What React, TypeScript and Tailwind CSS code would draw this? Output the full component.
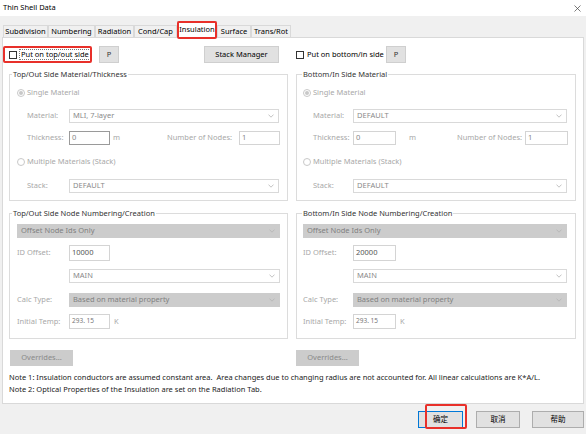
import React from 'react';

const font = "font-['Noto_Sans','Noto_Sans_CJK_SC',sans-serif]";

function Chevron() {
  return (
    <svg width="6" height="4" viewBox="0 0 6 4" className="shrink-0">
      <path d="M0.5 0.6 L3 3.2 L5.5 0.6" fill="none" stroke="#b4b4b4" strokeWidth="0.8" />
    </svg>
  );
}

function Combo({ text, gray, className }: { text: string; gray?: boolean; className: string }) {
  return (
    <div
      className={`flex items-center justify-between pl-[3px] pr-[4px] border ${
        gray ? 'bg-[#cccccc] border-[#cccccc] text-[#808080]' : 'bg-white border-[#d9d9d9] text-[#8a8a8a]'
      } ${className}`}
    >
      <span>{text}</span>
      <Chevron />
    </div>
  );
}

function Input({ value, className }: { value: string; className: string }) {
  return <div className={`flex items-start pl-[2px] leading-[11px] bg-white border ${className}`}>{value}</div>;
}

function Radio({ on }: { on?: boolean }) {
  return (
    <span className="w-[8px] h-[8px] rounded-full border border-[#c8c8c8] flex items-center justify-center shrink-0">
      {on && <span className="w-[4px] h-[4px] rounded-full bg-[#c8c8c8]" />}
    </span>
  );
}

const tabs = [
  { name: 'Subdivision', w: 'w-[45px]' },
  { name: 'Numbering', w: 'w-[47px]' },
  { name: 'Radiation', w: 'w-[39px]' },
  { name: 'Cond/Cap', w: 'w-[43px]' },
  { name: 'Insulation', w: 'w-[40px]', active: true },
  { name: 'Surface', w: 'w-[34px]' },
  { name: 'Trans/Rot', w: 'w-[40px]' },
];

export default function App() {
  return (
    <div className={`w-[586px] h-[434px] bg-[#f0f0f0] flex flex-col text-[7.5px] text-black overflow-hidden ${font}`}>
      {/* Title bar */}
      <div className="h-[16px] bg-white flex items-center justify-between pl-[3px] pr-[5px] shrink-0">
        <span className="text-[7.5px]">Thin Shell Data</span>
        <svg width="7" height="7" viewBox="0 0 7 7">
          <path d="M0.5 0.5 L6.5 6.5 M6.5 0.5 L0.5 6.5" stroke="#444" strokeWidth="0.7" />
        </svg>
      </div>

      {/* Tabs */}
      <div className="h-[21px] flex items-end pl-[3px] shrink-0 relative z-10">
        {tabs.map((t) =>
          t.active ? (
            <div
              key={t.name}
              className={`${t.w} h-[17px] -mb-[1px] bg-white border-t border-l border-r border-[#d9d9d9] flex items-center justify-center relative`}
            >
              <span className="-mt-[1px]">{t.name}</span>
              <span className="absolute -left-[1px] -top-[1px] w-[40px] h-[18px] border-2 border-[#e8302a] rounded-[2px]" />
            </div>
          ) : (
            <div
              key={t.name}
              className={`${t.w} h-[12px] bg-[#f0f0f0] border-t border-l border-r border-[#d9d9d9] flex items-center justify-center`}
            >
              {t.name}
            </div>
          )
        )}
      </div>

      {/* Content panel */}
      <div className="mx-[2px] h-[367px] bg-white border border-[#d9d9d9] flex flex-col pl-[6px] shrink-0">
        {/* Top row */}
        <div className="mt-[8px] h-[17px] grid grid-cols-[279px_280px] gap-x-[8px]">
          <div className="flex items-center relative">
            <span className="absolute -left-[6px] top-0 w-[89px] h-[17px] border-2 border-[#e8302a] rounded-[2px]" />
            <div className="w-[90px] flex items-center">
              <span className="w-[8px] h-[8px] border border-[#333] bg-white shrink-0" />
              <span className="ml-[2px] border border-dotted border-[#777] px-[1px] leading-[9px]">Put on top/out side</span>
            </div>
            <button className="w-[20px] h-[17px] bg-[#e1e1e1] border border-[#cfcfcf] text-[#333]">P</button>
            <button className="ml-[85px] w-[75px] h-[17px] bg-[#e1e1e1] border border-[#cfcfcf]">Stack Manager</button>
          </div>
          <div className="flex items-center">
            <div className="w-[90px] flex items-center">
              <span className="w-[8px] h-[8px] border border-[#333] bg-white shrink-0" />
              <span className="ml-[3px]">Put on bottom/in side</span>
            </div>
            <button className="w-[20px] h-[17px] bg-[#e1e1e1] border border-[#cfcfcf] text-[#333]">P</button>
          </div>
        </div>

        {/* Material groups */}
        <div className="mt-[5px] grid grid-cols-[279px_280px] gap-x-[8px]">
          <fieldset className="border border-[#dcdcdc] pb-[7px] pr-[7px]">
            <legend className="ml-[2px] px-[1px] h-[12px] leading-[12px] text-[#333]">Top/Out Side Material/Thickness</legend>
            <div className="flex flex-col text-[#a8a8a8]">
              <div className="mt-[7px] h-[12px] flex items-center pl-[7px]">
                <Radio on />
                <span className="ml-[2px]">Single Material</span>
              </div>
              <div className="mt-[10px] h-[14px] flex items-center pl-[17px]">
                <span className="w-[42px]">Material:</span>
                <Combo text="MLI, 7-layer" className="w-[210px] h-[14px]" />
              </div>
              <div className="mt-[8px] h-[14px] flex items-center pl-[17px]">
                <span className="w-[42px]">Thickness:</span>
                <Input value="0" className="w-[41px] h-[14px] border-[#9a9a9a] text-[#888]" />
                <span className="ml-[3px]">m</span>
                <span className="flex-1" />
                <span>Number of Nodes:</span>
                <Input value="1" className="ml-[7px] w-[41px] h-[14px] border-[#d4d4d4] text-[#888]" />
              </div>
              <div className="mt-[11px] h-[12px] flex items-center pl-[7px]">
                <Radio />
                <span className="ml-[2px]">Multiple Materials (Stack)</span>
              </div>
              <div className="mt-[11px] h-[14px] flex items-center pl-[17px]">
                <span className="w-[42px]">Stack:</span>
                <Combo text="DEFAULT" className="w-[210px] h-[14px]" />
              </div>
            </div>
          </fieldset>

          <fieldset className="border border-[#dcdcdc] pb-[7px] pr-[7px]">
            <legend className="ml-[5px] px-[1px] h-[12px] leading-[12px] text-[#333]">Bottom/In Side Material</legend>
            <div className="flex flex-col text-[#a8a8a8]">
              <div className="mt-[7px] h-[12px] flex items-center pl-[6px]">
                <Radio on />
                <span className="ml-[2px]">Single Material</span>
              </div>
              <div className="mt-[10px] h-[14px] flex items-center pl-[16px]">
                <span className="w-[40px]">Material:</span>
                <Combo text="DEFAULT" className="w-[214px] h-[14px]" />
              </div>
              <div className="mt-[8px] h-[14px] flex items-center pl-[16px]">
                <span className="w-[40px]">Thickness:</span>
                <Input value="0" className="w-[43px] h-[14px] border-[#d4d4d4] text-[#888]" />
                <span className="ml-[13px]">m</span>
                <span className="flex-1" />
                <span>Number of Nodes:</span>
                <Input value="1" className="ml-[3px] w-[43px] h-[14px] border-[#d4d4d4] text-[#888]" />
              </div>
              <div className="mt-[11px] h-[12px] flex items-center pl-[6px]">
                <Radio />
                <span className="ml-[2px]">Multiple Materials (Stack)</span>
              </div>
              <div className="mt-[11px] h-[14px] flex items-center pl-[16px]">
                <span className="w-[40px]">Stack:</span>
                <Combo text="DEFAULT" className="w-[214px] h-[14px]" />
              </div>
            </div>
          </fieldset>
        </div>

        {/* Node numbering groups */}
        <div className="mt-[6px] grid grid-cols-[279px_280px] gap-x-[8px]">
          <fieldset className="border border-[#dcdcdc] pb-[9px]">
            <legend className="ml-[2px] px-[1px] h-[12px] leading-[12px] text-[#333]">Top/Out Side Node Numbering/Creation</legend>
            <div className="flex flex-col text-[#a8a8a8]">
              <div className="mt-[5px] pl-[7px]">
                <Combo text="Offset Node Ids Only" gray className="w-[263px] h-[14px]" />
              </div>
              <div className="mt-[7px] h-[16px] flex items-center pl-[7px]">
                <span className="w-[52px]">ID Offset:</span>
                <Input value="10000" className="w-[41px] h-[16px] border-[#d4d4d4] text-[#555] pt-[1px]" />
              </div>
              <div className="mt-[8px] pl-[59px]">
                <Combo text="MAIN" className="w-[211px] h-[14px]" />
              </div>
              <div className="mt-[10px] h-[14px] flex items-center pl-[7px]">
                <span className="w-[52px]">Calc Type:</span>
                <Combo text="Based on material property" gray className="w-[211px] h-[14px]" />
              </div>
              <div className="mt-[7px] h-[15px] flex items-center pl-[7px]">
                <span className="w-[52px]">Initial Temp:</span>
                <Input value="293. 15" className="w-[41px] h-[15px] border-[#d4d4d4] text-[#777] text-[6.5px]" />
                <span className="ml-[4px]">K</span>
              </div>
            </div>
          </fieldset>

          <fieldset className="border border-[#dcdcdc] pb-[9px]">
            <legend className="ml-[5px] px-[1px] h-[12px] leading-[12px] text-[#333]">Bottom/In Side Node Numbering/Creation</legend>
            <div className="flex flex-col text-[#a8a8a8]">
              <div className="mt-[5px] pl-[6px]">
                <Combo text="Offset Node Ids Only" gray className="w-[264px] h-[14px]" />
              </div>
              <div className="mt-[7px] h-[16px] flex items-center pl-[6px]">
                <span className="w-[50px]">ID Offset:</span>
                <Input value="20000" className="w-[43px] h-[16px] border-[#d4d4d4] text-[#555] pt-[1px]" />
              </div>
              <div className="mt-[8px] pl-[56px]">
                <Combo text="MAIN" className="w-[214px] h-[14px]" />
              </div>
              <div className="mt-[10px] h-[14px] flex items-center pl-[6px]">
                <span className="w-[50px]">Calc Type:</span>
                <Combo text="Based on material property" gray className="w-[214px] h-[14px]" />
              </div>
              <div className="mt-[7px] h-[15px] flex items-center pl-[6px]">
                <span className="w-[50px]">Initial Temp:</span>
                <Input value="293. 15" className="w-[43px] h-[15px] border-[#d4d4d4] text-[#777] text-[6.5px]" />
                <span className="ml-[4px]">K</span>
              </div>
            </div>
          </fieldset>
        </div>

        {/* Overrides */}
        <div className="mt-[11px] h-[16px] grid grid-cols-[279px_280px] gap-x-[8px]">
          <button className="ml-[1px] w-[63px] h-[16px] bg-[#cccccc] text-[#8a8a8a]">Overrides...</button>
          <button className="w-[63px] h-[16px] bg-[#cccccc] text-[#8a8a8a]">Overrides...</button>
        </div>

        {/* Notes */}
        <div className="mt-[5px] flex flex-col leading-[12px] text-[#222]">
          <span>
            Note 1: Insulation conductors are assumed constant area.&nbsp; Area changes due to changing radius are not accounted for. All linear
            calculations are K*A/L.
          </span>
          <span>Note 2: Optical Properties of the Insulation are set on the Radiation Tab.</span>
        </div>
      </div>

      {/* Footer */}
      <div className="mt-[7px] flex justify-end pr-[2px] gap-x-[12px]">
        <div className="relative mr-[1px]">
          <button className="w-[45px] h-[17px] bg-[#e1e1e1] border border-[#0078d7]">确定</button>
          <span className="absolute left-[7px] -top-[7px] w-[42px] h-[25px] border-2 border-[#e8302a] rounded-[2px]" />
        </div>
        <button className="w-[44px] h-[17px] bg-[#e1e1e1] border border-[#adadad]">取消</button>
        <button className="w-[52px] h-[17px] bg-[#e1e1e1] border border-[#adadad]">帮助</button>
      </div>
    </div>
  );
}
